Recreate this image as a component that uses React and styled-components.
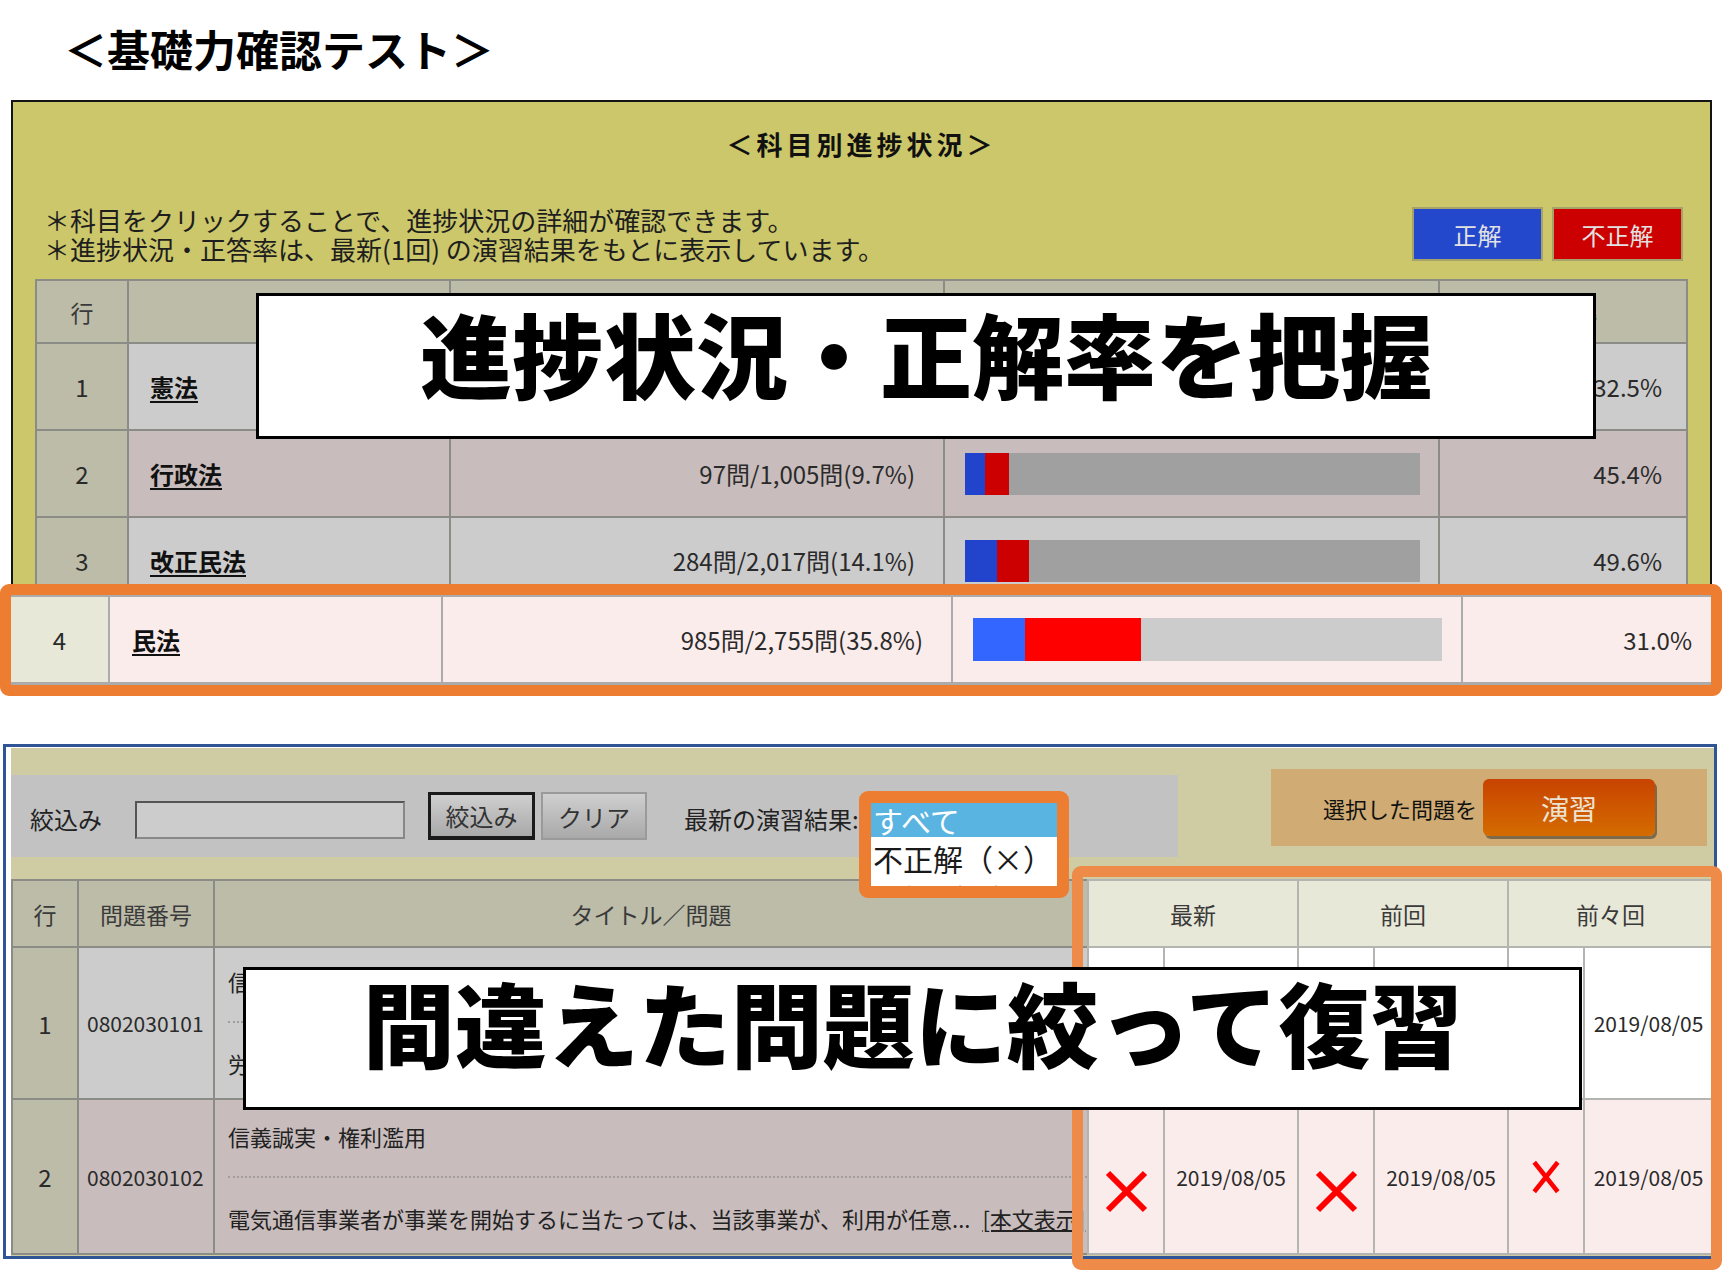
import React from 'react'
import styled, { createGlobalStyle } from 'styled-components'

const GlobalStyle = createGlobalStyle`
  html, body { margin: 0; padding: 0; background: #fff; }
  body {
    font-family: "Noto Sans CJK JP", "Noto Sans", sans-serif;
    color: #222;
  }
`

const Page = styled.div`
  position: relative;
  width: 1729px;
  height: 1271px;
  overflow: hidden;
`

const PageTitle = styled.h1`
  margin: 0;
  height: 100px;
  padding: 20px 0 0 64px;
  box-sizing: border-box;
  font-size: 43px;
  line-height: 56px;
  font-weight: 700;
  color: #000;
`

/* ---------- 科目別進捗状況 ---------- */

const ProgressPanel = styled.section`
  width: 1701px;
  margin-left: 11px;
  box-sizing: border-box;
  border: 2px solid #141414;
  background: #cbc76a;
  padding: 0 22px 2px;
`

const PanelHeading = styled.h2`
  margin: 0;
  padding-top: 26px;
  font-size: 26px;
  line-height: 32px;
  font-weight: 700;
  letter-spacing: 4px;
  text-align: center;
  color: #111;
`

const NoteRow = styled.div`
  display: flex;
  justify-content: space-between;
  align-items: center;
  margin-top: 45px;
  padding: 0 5px 0 9px;
`

const Notes = styled.div`
  font-size: 26px;
  line-height: 29px;
  color: #1e1e1e;
  white-space: nowrap;
`

const Legend = styled.div`
  display: flex;
  gap: 9px;
`

const LegendChip = styled.div`
  width: 131px;
  height: 54px;
  box-sizing: border-box;
  border: 2px solid #a6a36a;
  background: ${p => p.$color};
  color: #e2e2e2;
  font-size: 24px;
  display: flex;
  align-items: center;
  justify-content: center;
`

const ProgressGrid = styled.div`
  display: grid;
  grid-template-columns: 90px 320px 492px 493px 246px;
  grid-template-rows: 61px repeat(4, 85px);
  gap: 2px;
  padding: 2px;
  margin-top: 16px;
  background: #8c8c86;
`

const HeadCell = styled.div`
  background: ${p => p.$bg || '#bcbca9'};
  color: #3a3a3a;
  font-size: 23px;
  display: flex;
  align-items: center;
  justify-content: center;
  white-space: nowrap;
`

const Cell = styled.div`
  background: ${p => p.$bg};
  display: flex;
  align-items: center;
  justify-content: ${p => (p.$align === 'right' ? 'flex-end' : p.$align === 'left' ? 'flex-start' : 'center')};
  padding: ${p => p.$pad || '0'};
  font-size: ${p => p.$size || '24px'};
  color: #2a2a2a;
  white-space: nowrap;
  overflow: hidden;
  min-width: 0;
`

const SubjectLink = styled.a`
  color: #111;
  font-weight: 700;
  font-size: 24px;
  text-decoration: underline;
  text-underline-offset: 4px;
`

const Bar = styled.div`
  display: flex;
  width: 100%;
  height: ${p => p.$h}px;
  background: ${p => p.$track};
`

const Seg = styled.div`
  height: 100%;
  background: ${p => p.$c};
`

/* ---------- 問題一覧 ---------- */

const ReviewPanel = styled.section`
  width: 1714px;
  height: 515px;
  margin: 48px 0 0 3px;
  box-sizing: border-box;
  border: 3px solid #2f5597;
  background: #fff;
  padding: 1px 0 0 5px;
  overflow: hidden;
`

const ReviewBody = styled.div`
  height: 100%;
  background: #cfcca3;
`

const Toolbar = styled.div`
  display: flex;
  justify-content: space-between;
  align-items: flex-start;
  height: 109px;
`

const FilterBar = styled.div`
  width: 1167px;
  height: 82px;
  margin-top: 27px;
  background: #c2c2c2;
  display: flex;
  align-items: center;
  padding: 4px 0 0 19px;
  box-sizing: border-box;
  font-size: 24px;
  color: #222;
`

const FilterLabel = styled.span`
  width: ${p => p.$w}px;
  margin-left: ${p => p.$ml || 0}px;
  white-space: nowrap;
`

const TextInput = styled.div`
  width: 270px;
  height: 38px;
  margin: 4px 0 0 33px;
  box-sizing: border-box;
  background: #cccccc;
  border: 2px solid #555;
  border-right-color: #888;
  border-bottom-color: #888;
`

const FilterButton = styled.button`
  width: ${p => p.$w}px;
  height: 48px;
  margin: -4px 0 0 ${p => p.$ml}px;
  box-sizing: border-box;
  font-family: inherit;
  font-size: 24px;
  color: #333;
  background: linear-gradient(#cfcfcf, #a9a9a9);
  border: ${p => (p.$pressed ? '3px solid #1a1a1a' : '2px solid #9a9a9a')};
  border-bottom-width: ${p => (p.$pressed ? '4px' : '2px')};
  padding: 0;
`

const SelectAnchor = styled.div`
  position: relative;
  align-self: stretch;
  width: 210px;
  margin-top: -4px;
`

const SelectFrame = styled.div`
  position: absolute;
  top: 16px;
  left: 0;
  width: 210px;
  height: 107px;
  box-sizing: border-box;
  border: 12px solid #ed7d31;
  border-radius: 9px;
  background: #fff;
  overflow: hidden;
  z-index: 2;
`

const Option = styled.div`
  height: ${p => p.$h}px;
  line-height: ${p => p.$h}px;
  padding-left: 2px;
  font-size: 30px;
  white-space: nowrap;
  background: ${p => (p.$active ? '#5ab4e1' : '#fff')};
  color: ${p => (p.$active ? '#fff' : '#1a1a1a')};
`

const RunBox = styled.div`
  width: 436px;
  height: 77px;
  margin: 21px 7px 0 0;
  box-sizing: border-box;
  background: #d0ac74;
  display: flex;
  align-items: center;
  padding-left: 52px;
  font-size: 22px;
  color: #111;
`

const RunButton = styled.button`
  width: 172px;
  height: 57px;
  margin-left: 6px;
  border: none;
  border-radius: 6px;
  background: linear-gradient(#c84300, #d46c00);
  box-shadow: 2px 3px 0 #7d6a4a;
  color: #ece3d5;
  font-family: inherit;
  font-size: 28px;
  padding: 0;
`

const ReviewGrid = styled.div`
  display: grid;
  grid-template-columns: 64px 134px 872px 74px 132px 74px 132px 74px 127px;
  grid-template-rows: 65px 150px 153px;
  gap: 2px;
  padding: 2px;
  margin-top: 22px;
  background: #8c8c86;
`

const LitHead = styled(HeadCell)`
  background: #e8e8d8;
  box-shadow: 0 0 0 2px #b4b4b0;
`

const LitCell = styled(Cell)`
  box-shadow: 0 0 0 2px #b4b4b0;
  padding-top: ${p => p.$pt || 0}px;
`

const TitleCell = styled.div`
  background: ${p => p.$bg};
  padding: ${p => p.$pt}px 0 0 13px;
  overflow: hidden;
  white-space: nowrap;
  font-size: 22px;
  color: #222;
`

const TitleLine = styled.div`
  line-height: 28px;
`

const Dots = styled.div`
  margin: 26px 0;
  border-top: 2px dotted #a39c9c;
`

const MoreLink = styled.a`
  color: #222;
  text-decoration: underline;
  margin-left: 12px;
`

/* ---------- overlays ---------- */

const Spotlight = styled.div`
  position: absolute;
  left: 0;
  top: 584px;
  width: 1722px;
  height: 112px;
  box-sizing: border-box;
  border: 11px solid #ed7d31;
  border-radius: 9px;
  overflow: hidden;
  background: #fbecec;
`

const SpotGrid = styled.div`
  display: grid;
  grid-template-columns: 97px 331px 508px 508px 248px;
  grid-template-rows: 85px;
  column-gap: 2px;
  padding: 2px 0 3px;
  background: #ababab;
`

const FocusFrame = styled.div`
  position: absolute;
  left: 1072px;
  top: 866px;
  width: 650px;
  height: 404px;
  box-sizing: border-box;
  border: 11px solid #ef8b48;
  border-radius: 9px;
`

const Callout = styled.div`
  position: absolute;
  left: ${p => p.$x}px;
  top: ${p => p.$y}px;
  width: ${p => p.$w}px;
  height: ${p => p.$h}px;
  box-sizing: border-box;
  border: 3px solid #000;
  background: #fff;
  padding-top: ${p => p.$pt}px;
  text-align: center;
  font-size: 92px;
  line-height: 92px;
  font-weight: 900;
  color: #000;
  white-space: nowrap;
  z-index: 3;
`

const Cross = ({ w, h, sw = 6 }) => (
  <svg width={w} height={h} viewBox={`0 0 ${w} ${h}`}>
    <path
      d={`M${sw / 2} ${sw / 2} L${w - sw / 2} ${h - sw / 2} M${w - sw / 2} ${sw / 2} L${sw / 2} ${h - sw / 2}`}
      stroke="#ff0000"
      strokeWidth={sw}
      fill="none"
    />
  </svg>
)

// row 1 lies under the callout and row 4 under the spotlight,
// so only what shows beside them is filled in
const subjects = [
  { n: 1, name: '憲法', count: '', progress: 0, rate: 32.5, bg: '#cccccc' },
  { n: 2, name: '行政法', count: '97問/1,005問(9.7%)', progress: 9.7, rate: 45.4, bg: '#c8bcbc' },
  { n: 3, name: '改正民法', count: '284問/2,017問(14.1%)', progress: 14.1, rate: 49.6, bg: '#cccccc' },
  { n: 4, name: '', count: '', progress: 0, rate: null, bg: '#c8bcbc' },
]

const spot = { n: 4, name: '民法', count: '985問/2,755問(35.8%)', progress: 35.8, rate: 31.0 }

const questions = [
  {
    n: 1,
    id: '0802030101',
    title: '信',
    body: '労',
    bg: '#cccccc',
    lit: '#ffffff',
    pt: 19,
    hidden: true,
  },
  {
    n: 2,
    id: '0802030102',
    title: '信義誠実・権利濫用',
    body: '電気通信事業者が事業を開始するに当たっては、当該事業が、利用が任意...',
    more: '[本文表示]',
    bg: '#c8bcbc',
    lit: '#fbecec',
    pt: 22,
  },
]

const ProgressBar = ({ progress, rate, h, blue, red, track }) => {
  const ok = (progress * rate) / 100
  const ng = progress - ok
  return (
    <Bar $h={h} $track={track}>
      <Seg $c={blue} style={{ width: `${ok}%` }} />
      <Seg $c={red} style={{ width: `${ng}%` }} />
    </Bar>
  )
}

export default function App() {
  return (
    <Page>
      <GlobalStyle />
      <PageTitle>＜基礎力確認テスト＞</PageTitle>

      <ProgressPanel>
        <PanelHeading>＜科目別進捗状況＞</PanelHeading>
        <NoteRow>
          <Notes>
            ＊科目をクリックすることで、進捗状況の詳細が確認できます。
            <br />
            ＊進捗状況・正答率は、最新(1回) の演習結果をもとに表示しています。
          </Notes>
          <Legend>
            <LegendChip $color="#2348cc">正解</LegendChip>
            <LegendChip $color="#cc0000">不正解</LegendChip>
          </Legend>
        </NoteRow>
        <ProgressGrid>
          <HeadCell>行</HeadCell>
          <HeadCell />
          <HeadCell />
          <HeadCell />
          <HeadCell>正答率</HeadCell>
          {subjects.map(s => (
            <React.Fragment key={s.n}>
              <Cell $bg="#bcbca9">{s.name && s.n}</Cell>
              <Cell $bg={s.bg} $align="left" $pad="0 0 0 21px">
                {s.name && <SubjectLink>{s.name}</SubjectLink>}
              </Cell>
              <Cell $bg={s.bg} $align="right" $pad="0 28px 0 0">{s.count}</Cell>
              <Cell $bg={s.bg} $pad="0 18px 0 20px">
                {s.progress > 0 && (
                  <ProgressBar progress={s.progress} rate={s.rate} h={42} blue="#2244cc" red="#cc0000" track="#a0a0a0" />
                )}
              </Cell>
              <Cell $bg={s.bg} $align="right" $pad="0 24px 0 0">{s.rate != null && `${s.rate.toFixed(1)}%`}</Cell>
            </React.Fragment>
          ))}
        </ProgressGrid>
      </ProgressPanel>

      <ReviewPanel>
        <ReviewBody>
          <Toolbar>
            <FilterBar>
              <FilterLabel $w={72}>絞込み</FilterLabel>
              <TextInput />
              <FilterButton $w={107} $ml={23} $pressed>絞込み</FilterButton>
              <FilterButton $w={106} $ml={6}>クリア</FilterButton>
              <FilterLabel $w={175} $ml={37}>最新の演習結果:</FilterLabel>
              <SelectAnchor>
                <SelectFrame>
                  <Option $h={34} $active>すべて</Option>
                  <Option $h={43}>不正解（×）</Option>
                  <Option $h={36}>正解（○）</Option>
                </SelectFrame>
              </SelectAnchor>
            </FilterBar>
            <RunBox>
              選択した問題を
              <RunButton>演習</RunButton>
            </RunBox>
          </Toolbar>

          <ReviewGrid>
            <HeadCell>行</HeadCell>
            <HeadCell>問題番号</HeadCell>
            <HeadCell>タイトル／問題</HeadCell>
            <LitHead style={{ gridColumn: 'span 2' }}>最新</LitHead>
            <LitHead style={{ gridColumn: 'span 2' }}>前回</LitHead>
            <LitHead style={{ gridColumn: 'span 2' }}>前々回</LitHead>
            {questions.map(q => (
              <React.Fragment key={q.n}>
                <Cell $bg="#bcbca9" $size="24px">{q.n}</Cell>
                <Cell $bg={q.bg} $align="left" $pad="0 0 0 8px" $size="21px">{q.id}</Cell>
                <TitleCell $bg={q.bg} $pt={q.pt}>
                  <TitleLine>{q.title}</TitleLine>
                  <Dots />
                  <TitleLine>
                    {q.body}
                    {q.more && <MoreLink>{q.more}</MoreLink>}
                  </TitleLine>
                </TitleCell>
                <LitCell $bg={q.lit} $pt={30}>{!q.hidden && <Cross w={43} h={43} sw={6} />}</LitCell>
                <LitCell $bg={q.lit} $size="21px">{!q.hidden && '2019/08/05'}</LitCell>
                <LitCell $bg={q.lit} $pt={30}>{!q.hidden && <Cross w={43} h={43} sw={6} />}</LitCell>
                <LitCell $bg={q.lit} $size="21px">{!q.hidden && '2019/08/05'}</LitCell>
                <LitCell $bg={q.lit}>{!q.hidden && <Cross w={28} h={34} sw={4.5} />}</LitCell>
                <LitCell $bg={q.lit} $size="21px">2019/08/05</LitCell>
              </React.Fragment>
            ))}
          </ReviewGrid>
        </ReviewBody>
      </ReviewPanel>

      <Spotlight>
        <SpotGrid>
          <Cell $bg="#e8e8d8">{spot.n}</Cell>
          <Cell $bg="#fbecec" $align="left" $pad="0 0 0 22px">
            <SubjectLink>{spot.name}</SubjectLink>
          </Cell>
          <Cell $bg="#fbecec" $align="right" $pad="0 28px 0 0">{spot.count}</Cell>
          <Cell $bg="#fbecec" $pad="0 19px 0 20px">
            <ProgressBar progress={spot.progress} rate={spot.rate} h={43} blue="#3366ff" red="#ff0000" track="#cccccc" />
          </Cell>
          <Cell $bg="#fbecec" $align="right" $pad="0 19px 0 0">{spot.rate.toFixed(1)}%</Cell>
        </SpotGrid>
      </Spotlight>

      <FocusFrame />

      <Callout $x={256} $y={293} $w={1340} $h={146} $pt={10}>進捗状況・正解率を把握</Callout>
      <Callout $x={243} $y={967} $w={1339} $h={143} $pt={5}>間違えた問題に絞って復習</Callout>
    </Page>
  )
}
